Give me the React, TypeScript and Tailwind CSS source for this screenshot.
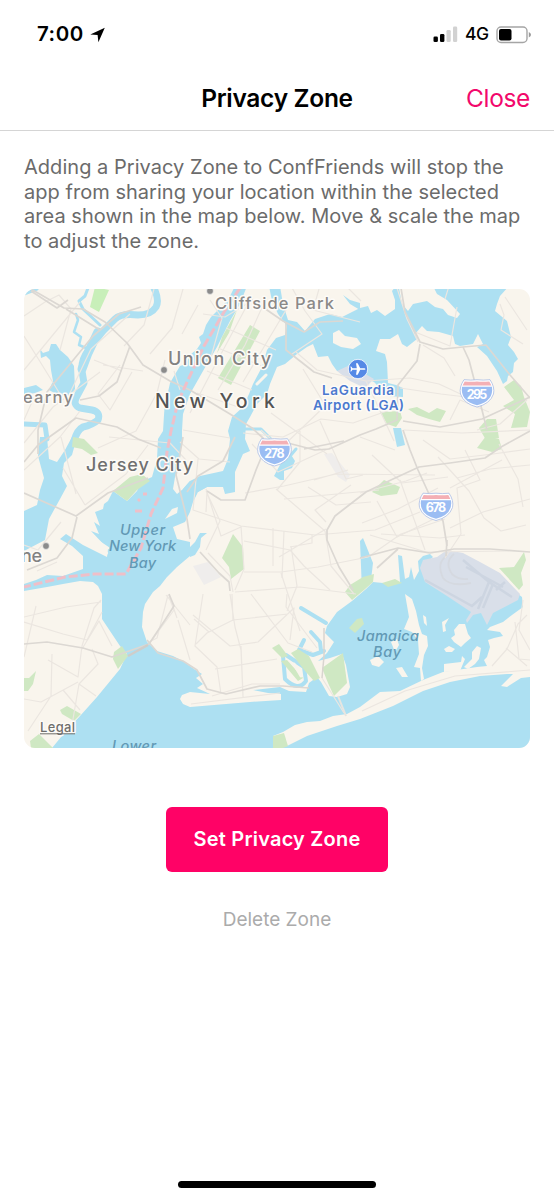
import React from "react";

const WATER = "#ade0f2";
const LAND = "#f9f5ed";
const PARK = "#cfe8c3";

const waterAreas = [
  // Hudson, Upper and Lower Bay, Jamaica Bay
  "235,286 228,300 219,309 211,317 206,325 203,334 199,337 201,343 197,349 190,355 186,364 180,366 174,376 170,383 168,392 165,401 164,415 163,431 158,439 157,459 152,477 141,482 137,491 127,501 113,491 110,497 108,501 104,504 103,509 95,512 100,526 94,522 99,534 91,531 108,549 107,557 83,545 66,534 60,539 72,546 83,556 83,569 63,576 47,575 36,580 24,584 24,591 47,587 63,584 80,581 93,582 98,586 102,594 102,619 120,646 127,654 120,669 97,697 80,716 66,731 52,748 530,748 530,668 487,666 484,660 487,657 490,647 488,640 494,638 503,636 500,632 487,630 490,627 503,622 512,615 523,607 522,597 518,594 470,590 430,570 423,566 433,557 430,554 423,556 418,561 419,571 414,580 411,567 409,577 405,579 402,556 398,555 400,582 389,586 383,583 373,582 366,589 352,601 337,612 327,626 325,633 334,642 327,653 318,661 330,658 342,654 346,665 350,687 347,694 337,697 329,696 321,682 317,677 309,683 306,692 289,691 280,687 253,690 268,693 281,694 281,700 250,702 190,707 183,704 180,699 182,695 190,692 210,694 197,688 203,684 196,678 202,674 194,669 183,661 173,656 157,651 147,642 142,627 143,612 145,604 153,592 160,586 167,577 177,567 190,556 190,542 177,539 173,527 185,522 190,512 193,502 198,492 207,487 190,481 183,489 177,494 173,489 175,477 180,459 182,439 182,431 183,414 190,394 207,364 217,347 230,321 240,304 247,286",
  // East River, Flushing Bay and Long Island Sound
  "183,489 190,481 200,476 223,471 228,459 230,439 228,431 232,417 243,407 249,394 253,384 262,367 267,350 276,338 285,335 287,326 278,314 272,301 269,286 280,286 283,304 288,320 297,322 305,331 315,319 330,314 342,317 352,312 360,308 368,306 371,313 377,310 385,316 395,309 395,300 392,291 396,286 399,288 402,304 408,311 413,304 427,301 435,307 443,309 448,315 457,318 460,314 447,300 437,294 433,286 509,286 500,296 497,304 495,311 507,321 511,337 508,345 514,352 518,359 514,363 513,372 508,376 507,381 503,384 497,371 487,356 477,347 483,344 478,334 473,344 460,346 455,344 453,336 439,332 427,331 422,326 415,334 417,339 407,347 402,344 398,334 390,339 380,339 376,351 385,354 387,362 388,383 396,385 403,388 403,397 388,396 374,382 350,371 337,371 332,364 328,356 318,357 313,344 307,347 297,354 285,364 277,367 270,384 267,394 257,404 250,417 246,424 245,439 250,451 243,454 235,472 235,492 225,494 223,487 207,487 198,492",
  "343,295 350,300 360,303 360,310 350,304",
  // Hackensack marsh
  "40,349 43,353 49,351 51,344 56,344 60,350 68,357 74,366 75,389 70,396 58,395 49,390 53,381 51,370 50,360 46,356 41,358",
  "24,388 36,385 43,390 35,393 24,395",
  // Newark Bay
  "40,437 47,437 49,459 57,462 65,450 72,437 77,437 72,455 64,463 62,476 67,486 60,499 49,519 45,540 24,551 24,511 37,505 40,490 44,478 38,456",
  // Gowanus and Newtown creeks
  "190,547 195,542 200,533 207,533 201,538 200,547 195,555 190,557",
  "274,476 281,463 283,456 290,453 295,461 292,468 284,471 284,480 280,480",
  "393,428 401,428 405,445 397,447",
  "360,541 363,538 373,563 371,580 362,591",
];

const islands = [
  "273,736 283,732 295,725 307,722 320,721 333,716 347,714 360,707 380,692 400,691 423,680 443,672 477,667 497,665 530,661 530,677 521,678 507,687 501,686 513,674 507,674 480,676 450,682 423,691 393,706 360,719 337,726 307,736 287,746 273,748",
  "333,333 339,330 345,336 357,338 361,344 353,349 341,347 333,343",
  "405,594 412,599 416,611 419,625 422,634 427,636 428,646 424,655 422,668 424,679 421,681 420,668 414,667 419,654 418,640 412,632 404,629 409,617",
  "423,615 426,617 427,626 424,623",
  "370,660 378,656 384,662 379,667 372,665",
  "396,668 402,667 408,677 402,677",
  "442,622 449,618 445,625 446,631 443,632",
  "451,638 455,635 454,630 459,624 465,624 468,634 471,638 465,643 461,647 454,642",
  "444,649 449,646 455,649 452,652 446,652",
  "444,664 461,662 462,656 465,659 460,671 444,672",
  "464,667 472,659 472,652 477,646 481,648 479,659 475,664 468,669",
  "165,519 172,509 178,507 177,513",
  "391,642 397,639 399,645 395,652",
];

const landPatches = [
  "324,454 332,453 350,475 346,482 338,477",
  "193,566 208,562 221,577 204,585",
];

const airports = [
  "337,371 350,365 374,379 365,388 350,381",
  "420,568 423,560 437,557 447,550 463,553 480,562 500,573 520,594 518,600 493,613 487,625 481,613 473,615 467,623 466,620 471,612 447,596 425,582",
];

const parks = [
  "250,325 260,331 231,385 218,378",
  "237,310 229,333 217,353 222,337",
  "73,437 84,439 98,453 91,455 82,449 72,447",
  "113,491 130,477 142,474 150,481 137,490 127,501",
  "233,534 243,547 244,569 231,579 229,567 222,558",
  "272,648 279,644 288,656 282,658",
  "291,653 298,649 309,656 320,678 314,681 305,671",
  "281,661 287,660 303,678 298,681",
  "322,668 343,653 347,683 334,696 328,683",
  "273,736 284,733 288,746 283,748 273,748",
  "114,652 122,646 128,656 118,669 113,659",
  "60,710 67,706 81,714 74,721 62,714",
  "24,678 29,678 36,671 33,684 28,691 24,691",
  "30,741 39,734 53,748 31,748",
  "380,412 400,411 402,418 396,427 387,424",
  "408,409 417,407 429,413 437,408 446,411 440,422 429,419 417,415",
  "479,428 487,419 496,419 499,438 486,440",
  "504,387 514,380 521,386 524,397 530,412 527,427 511,428 515,414 503,406 514,400",
  "372,492 384,480 400,487 397,494 381,496",
  "477,448 486,436 499,439 502,449 492,452",
  "499,568 514,567 524,552 526,560 521,573 523,585 519,590",
  "345,592 350,585 363,577 374,574 373,582 364,590 352,600",
  "382,583 395,579 402,583 388,587",
  "349,628 357,619 362,618 364,624 355,633",
];

const minorRoads = [
  "M24 316L45 302L59 295L71 309L60 350M24 370L80 302M24 336L39 360L60 394M69 395L91 349L130 314M94 360L122 371M120 365L98 394L110 410L132 372M103 365L143 371M24 420L36 393M24 443L53 407L100 372",
  "M154 289L144 325L124 346M183 289L172 328L150 354M198 305L182 334M165 360L157 393L136 431L98 448M174 371L180 390M109 437L170 443L186 460",
  "M24 470L60 437L80 411M61 437L76 494M63 468L85 505M24 545L38 550L61 522M57 562L37 571M85 505L126 474L148 445",
  "M252 296L213 369L190 413M264 303L245 345L218 390M286 310L243 382M226 328L276 350M218 348L264 367M207 371L252 390M197 393L244 409M183 430L230 438M180 442L199 459L230 462",
  "M210 300L222 318L209 364M250 302L225 317L203 314",
  "M291 286L305 311L322 334L292 354M319 289L313 310L360 322M348 288L361 301M397 288L407 319L418 342M449 286L445 299",
  "M296 352L317 370L366 381L410 378L439 384L467 397M303 369L325 405L360 411M366 381L376 402L394 441M243 433L283 437L321 419L353 423L387 411",
  "M261 430L281 448L325 406M252 444L278 472L330 448M271 413L327 454M320 421L346 479L363 475M300 431L300 462L277 490",
  "M198 459L193 510L241 526L315 535L375 530L420 512M206 489L221 536L241 527M206 491L220 521L206 550M207 492L206 512M241 526L244 569L235 590",
  "M245 493L284 486L336 474L435 475M276 489L325 531M284 499L379 490M308 487L336 505L371 502M314 480L348 470M326 522L315 510L351 485",
  "M273 528L273 566M284 531L282 578M290 547L312 543L312 535M279 557L326 529M244 541L290 550L304 566L330 590M325 531L331 566L354 594M291 546L297 586L287 611",
  "M244 572L281 572L318 567L368 557L401 534L445 519M235 592L300 587L356 594M281 573L300 631M208 553L230 576L233 592",
  "M360 493L406 481L427 473M362 523L398 509L438 488M370 535L426 552L509 551M377 501L397 537L450 511M400 480L425 550M381 534L440 538L465 535",
  "M372 455L402 483L448 477M438 457L469 491L484 518L501 531L526 525M499 444L518 479L523 507M457 478L490 469L530 465M450 488L502 460M450 528L483 512L530 499M465 450L480 480L457 488L461 534L445 558",
  "M423 440L450 459L493 454L530 449M360 437L395 450M400 388L441 394L466 397M457 307L450 346L415 332M423 345L444 358L455 376M489 412L460 400L450 420M404 430L462 433L530 430",
  "M500 304L504 315L501 330L523 344M505 297L527 330M477 430L500 424L527 400",
  "M102 612L87 640L63 634L24 622M101 600L94 608L82 646L78 677L48 660M112 646L99 621L82 649M92 649L98 664L79 684L72 725M79 684L96 696M36 606L24 657M24 699L41 702L78 682M63 690L80 710M28 731L51 696L52 654M24 617L66 607L101 602",
  "M168 595L157 638L149 642M169 597L174 610L152 640M169 595L177 618M178 620L190 660M166 595L190 625",
  "M203 594L195 646L217 667L221 694M230 594L235 627L241 650L243 697M196 644L207 633L233 620L288 614M193 615L230 646L258 642L294 608L290 640M215 669L277 659M241 646L243 695M212 696L252 684L280 684M287 594L286 607L317 648M251 594L288 643L312 652M233 621L232 594M194 619L209 632M191 704L280 693",
  "M362 711L405 691L455 676L530 670M492 666L507 649L518 624L527 615M506 648L527 666M322 678L344 713M515 622L519 659L530 660M523 600L519 630L530 650",
];

const mainRoads = [
  "M24 285L64 308L83 309L105 322L127 343L143 365L170 381L190 390L230 414L252 428L263 438L265 446M66 309L100 330M130 346L117 382L99 396L80 400M31 291L57 308L68 300",
  "M141 307L119 314L93 336L47 392L38 430L38 454M24 462L38 445L76 418L117 427L138 439L161 448",
  "M24 493L76 516L108 493L148 478M77 517L72 538L57 558L27 570",
  "M248 297L283 321L304 332L320 322L343 321M286 322L286 350L314 372L332 378M401 288L405 312L420 342L443 349L463 347L486 345L510 375L530 398",
  "M420 344L417 361L398 385L397 420L376 429L360 435L329 449L315 450L280 441L266 446L256 470L245 500L221 500L207 491",
  "M463 347L469 360L475 383L482 410L487 430M403 421L440 427L482 419L530 397M403 430L410 450L418 470L429 494L443 521L447 546",
  "M530 431L501 447L485 458L450 463L419 467L393 479L366 492L344 509L335 516L327 530L327 540L339 567L353 590",
  "M360 558L398 548L430 553L454 549L490 549L530 552M377 568L398 549M447 540L446 556",
  "M24 644L47 642L83 648L112 657L149 644L165 620L174 606L169 594M200 552L219 573L229 582L230 591",
  "M147 640L158 653L183 661L197 670L207 689L226 694L260 686L283 686L309 688",
  "M183 437L176 475L187 519L190 539M235 437L223 461L198 476L187 492M304 449L344 441",
];

const shields = [
  { x: 274.5, y: 452, n: "278" },
  { x: 477, y: 393, n: "295" },
  { x: 436, y: 506.5, n: "678" },
];

type LabelProps = {
  x: number;
  y: number;
  w: number;
  size: number;
  fill?: string;
  weight?: number;
  italic?: boolean;
  children: string;
};

function Label({ x, y, w, size, fill = "#828282", weight = 500, italic, children }: LabelProps) {
  return (
    <text
      x={x}
      y={y}
      textLength={w}
      fontSize={size}
      fontWeight={weight}
      fontStyle={italic ? "italic" : "normal"}
      fill={fill}
      stroke={italic ? "none" : "#fdfbf7"}
      strokeWidth={italic ? 0 : 3}
      strokeLinejoin="round"
      paintOrder="stroke"
    >
      {children}
    </text>
  );
}

function Shield({ x, y, n }: { x: number; y: number; n: string }) {
  return (
    <g transform={`translate(${x} ${y})`}>
      <path
        d="M-13-13.3Q-6-12.5 0-13.3Q6-12.5 13-13.3Q18-6 16.5 1Q13 11 0 14Q-13 11-16.5 1Q-18-6-13-13.3Z"
        fill="#fff"
        stroke="#a9bde4"
        strokeWidth=".8"
      />
      <path d="M-12.3-11.6Q-6-10.8 0-11.4Q6-10.8 12.3-11.6L14.4-7.6H-14.4Z" fill="#f4b0b5" />
      <path d="M-15-6.2H15Q17 8 0 12.2Q-17 8-15-6.2Z" fill="#9bbdf3" />
      <text x="0" y="5.8" textAnchor="middle" textLength="20.5" fontSize="12.5" fontWeight="700" fill="#fff">
        {n}
      </text>
    </g>
  );
}

function ZoneMap() {
  return (
    <svg
      viewBox="24 289 506 459"
      className="block h-[459px] w-[506px] rounded-[11px]"
      fontFamily="Inter, 'Liberation Sans', sans-serif"
    >
      <rect x="24" y="289" width="506" height="459" fill={LAND} />
      {landPatches.map((p) => (
        <polygon key={p} points={p} fill="#efedec" />
      ))}
      {waterAreas.map((p) => (
        <polygon key={p} points={p} fill={WATER} />
      ))}
      <g fill="none" stroke={WATER} strokeLinejoin="round" strokeLinecap="round">
        <path
          d="M153 286Q160 300 156 307Q151 315 138 315Q121 313 115 319L103 331L95 341L88 351Q81 360 82 371L84 383L77 396Q72 405 80 408L92 410Q101 412 98 420Q92 425 83 427Q77 430 74 441"
          strokeWidth="7"
        />
        <path d="M98 332L88 353L82 369" strokeWidth="9" />
        <path d="M88 288L85 296L79 301L83 309L100 325" strokeWidth="3" />
        <path d="M76 314L78 320L74 332L81 337L79 345L86 348" strokeWidth="2.5" />
        <path d="M24 424L45 425L47 439" strokeWidth="5" />
        <path d="M24 294L37 289" strokeWidth="3" />
        <path d="M245 429L261 429L270 438" strokeWidth="3" />
        <path d="M283 464L291 455L296 449M277 458L285 465L292 461" strokeWidth="3" />
        <path d="M301 608L326 623M311 632L320 642L321 651M304 640L299 650L313 655L324 651M283 656L285 679Q298 692 306 681L304 667L286 655" strokeWidth="4" />
      </g>
      {islands.map((p) => (
        <polygon key={p} points={p} fill={LAND} />
      ))}
      {airports.map((p) => (
        <polygon key={p} points={p} fill="#d9dfe9" />
      ))}
      <path
        d="M463 560L489 582L512 597M466 567L503 587M489 582L478 609M493 584L483 608M425 580L472 606L482 597M505 582L496 590"
        fill="none"
        stroke="#cdd5e1"
        strokeWidth="2.5"
      />
      <path
        d="M447 556Q436 562 443 578Q450 587 471 583M454 554Q444 562 452 574Q458 580 468 579"
        fill="none"
        stroke="#d5d9e0"
        strokeWidth="1.8"
      />
      {parks.map((p) => (
        <polygon key={p} points={p} fill={PARK} />
      ))}
      <polygon points="95,287 109,290 99,312 90,307" fill="#c8efb9" />
      <g fill="none" strokeLinejoin="round">
        {minorRoads.map((d) => (
          <path key={d} d={d} stroke="#ebe6e0" strokeWidth="1.2" />
        ))}
        {mainRoads.map((d) => (
          <path key={d} d={d} stroke="#dcd8d3" strokeWidth="1.7" />
        ))}
        <path d="M128 656L148 645" stroke="#cfcdca" strokeWidth="2.5" />
        <path d="M338 696L346 716" stroke="#e8e5e0" strokeWidth="2" />
        <path d="M322 678L324 656L324 628" stroke="#d9d5d0" strokeWidth="1.5" />
        <path
          d="M240 288L224 312L204 346L188 380L178 402L171 431L167 452L163 488L151 514L141 548L126 574L94 574L65 577L24 587"
          stroke="#efbfc8"
          strokeWidth="3"
          strokeDasharray="9 3"
        />
        <path d="M135 511H142M143 494H147M138 501L140 499" stroke="#efbfc8" strokeWidth="3" />
      </g>
      <g fill="none" stroke={LAND} strokeLinecap="round">
        <path d="M82 539L106 553" strokeWidth="4" />
        <path d="M84 532L108 548" strokeWidth="2.5" />
        <path d="M294 664L301 676M257 384L266 375" strokeWidth="3" />
      </g>

      <g fill="#8b8b8b" stroke="#fff" strokeOpacity=".6" strokeWidth="1">
        <circle cx="210" cy="291" r="3.4" />
        <circle cx="164" cy="370" r="3.4" />
        <circle cx="46" cy="546" r="3.4" />
      </g>
      <Label x={215} y={308.5} w={119} size={16.5} fill="#8b8988">Cliffside Park</Label>
      <Label x={168} y={364.5} w={103} size={18}>Union City</Label>
      <Label x={155} y={407.5} w={120} size={19.5} fill="#545454">New York</Label>
      <Label x={86} y={471} w={107} size={18} fill="#707070">Jersey City</Label>
      <Label x={23} y={402.5} w={50} size={16.5} fill="#8b8988">earny</Label>
      <Label x={21} y={561.5} w={21} size={18}>ne</Label>
      <Label x={120} y={535} w={45} size={14.5} fill="#6299b5" italic>Upper</Label>
      <Label x={109} y={551} w={67} size={14.5} fill="#6299b5" italic>New York</Label>
      <Label x={129} y={567.5} w={27} size={14.5} fill="#6299b5" italic>Bay</Label>
      <Label x={357} y={640.5} w={62} size={14.5} fill="#6299b5" italic>Jamaica</Label>
      <Label x={373} y={656.5} w={28} size={14.5} fill="#6299b5" italic>Bay</Label>
      <Label x={112} y={750.5} w={44} size={14.5} fill="#6299b5" italic>Lower</Label>
      <circle cx="358" cy="369" r="9.7" fill="#5589e6" stroke="#fff" strokeWidth=".8" />
      <path
        d="M364.5 368.2L360.2 368.2L357.7 363.3H356L356.8 368.2L352.5 368.2L351.2 366.5H350.4L351 369L350.4 371.5H351.2L352.5 369.8H356.8L356 374.7H357.7L360.2 369.8H364.5Q366.5 369 364.5 368.2Z"
        fill="#fff"
      />
      <Label x={322} y={395} w={72} size={13.5} fill="#4b79cf" weight={600}>LaGuardia</Label>
      <Label x={313} y={410} w={91} size={13.5} fill="#4b79cf" weight={600}>Airport (LGA)</Label>
      {shields.map((s) => (
        <Shield key={s.n} {...s} />
      ))}
      <Label x={40} y={732} w={35} size={13} fill="#6e6e6b">Legal</Label>
      <path d="M40 733.8H75" stroke="#6e6e6b" strokeWidth="1" />
    </svg>
  );
}

function StatusBar() {
  return (
    <div className="flex h-[66px] items-center justify-between pt-[3px] pr-[22px] pl-[37px]">
      <div className="flex items-center">
        <span className="w-[50px] text-[20.5px] font-semibold tracking-[0.5px]">7:00</span>
        <svg viewBox="0 0 15 16" className="ml-[2.5px] h-4 w-[15px]">
          <path d="M14.8 .8L.3 7.6L7.6 8.1L8.4 15.3Z" fill="#000" />
        </svg>
      </div>
      <div className="flex items-center">
        <svg viewBox="0 0 26 17" className="h-[17px] w-[26px]">
          <rect x="1.5" y="10.5" width="4.4" height="5.5" rx="1.3" />
          <rect x="8" y="8" width="4.4" height="8" rx="1.3" />
          <rect x="14.5" y="4" width="4.2" height="12" rx="1.3" fill="#d2d2d2" />
          <rect x="21" y="0.5" width="4.2" height="15.5" rx="1.3" fill="#d2d2d2" />
        </svg>
        <span className="ml-[7px] w-[31px] text-[17.5px] font-medium tracking-[-0.4px]">4G</span>
        <svg viewBox="0 0 36 18" className="h-[18px] w-9">
          <rect x="1" y="1" width="30" height="15.5" rx="4" fill="#fff" stroke="#a5a5a5" strokeWidth="1.4" />
          <rect x="3" y="3" width="12.5" height="11.5" rx="2" />
          <path d="M32.8 6Q35 7 35 8.8Q35 10.6 32.8 11.6Z" fill="#9a9a9a" />
        </svg>
      </div>
    </div>
  );
}

export default function App() {
  return (
    <div className="flex h-[1200px] w-[554px] flex-col overflow-hidden bg-white font-[Inter,'Liberation_Sans',sans-serif] text-black">
      <StatusBar />
      <header className="grid h-[65px] grid-cols-[1fr_auto_1fr] items-center border-b border-[#d5d5d5] px-6">
        <span />
        <h1 className="text-[24.5px] font-semibold tracking-[-0.3px]">Privacy Zone</h1>
        <button className="justify-self-end text-[24.5px] tracking-[-0.35px] text-[#f2086b]">Close</button>
      </header>
      <main className="flex flex-col items-center px-6 pt-6">
        <p className="w-[506px] text-[20px] leading-[24.7px] tracking-[0.035px] whitespace-nowrap text-[#6b6b6b]">
          Adding a Privacy Zone to ConfFriends will stop the
          <br />
          app from sharing your location within the selected
          <br />
          area shown in the map below. Move &amp; scale the map
          <br />
          to adjust the zone.
        </p>
        <div className="mt-[35px]">
          <ZoneMap />
        </div>
        <button className="mt-[59px] h-[65px] w-[222px] rounded-[6px] bg-[#ff0266] text-[20px] font-semibold tracking-[0.2px] text-white">
          Set Privacy Zone
        </button>
        <button className="mt-[35px] text-[19px] leading-[26px] text-[#ababab]">Delete Zone</button>
      </main>
      <div className="mt-auto mb-3 h-[7px] w-[198px] self-center rounded-full bg-black" />
    </div>
  );
}
